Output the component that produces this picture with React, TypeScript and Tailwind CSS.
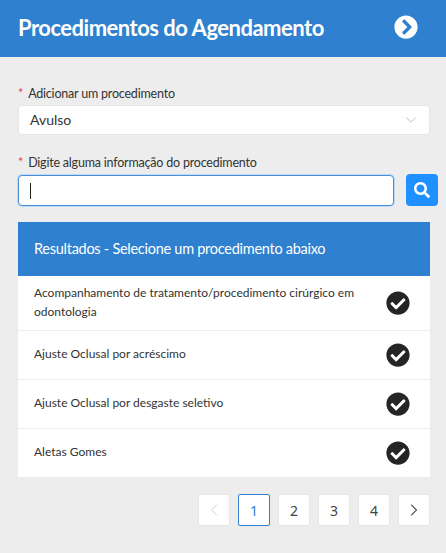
import { ChevronDown, ChevronLeft, ChevronRight } from "lucide-react";
import { FaCheckCircle, FaChevronCircleRight, FaSearch } from "react-icons/fa";

const results = [
  { name: "Acompanhamento de tratamento/procedimento cirúrgico em odontologia", row: "h-[55px]" },
  { name: "Ajuste Oclusal por acréscimo", row: "h-[49px]" },
  { name: "Ajuste Oclusal por desgaste seletivo", row: "h-[49px]" },
  { name: "Aletas Gomes", row: "h-[48px]" },
];

const pages = ["1", "2", "3", "4"];

export default function App() {
  return (
    <div className="w-[446px] h-[553px] overflow-hidden bg-[#ededed] font-['Lato',sans-serif]">
      {/* Header */}
      <div className="h-[57px] bg-[#2f80ce] pl-[18px] pr-[28px] pb-[3px] flex items-center justify-between">
        <h1 className="text-[22px] font-bold tracking-[-0.5px] text-white">Procedimentos do Agendamento</h1>
        <FaChevronCircleRight size={24} className="text-white" />
      </div>

      <div className="pl-[18px] pr-[8px] pt-[28px]">
        {/* Select */}
        <label className="block text-[12.5px] leading-[17px] tracking-[-0.2px] text-[#333]">
          <span className="text-[#e0434b] mr-[5px]">*</span>Adicionar um procedimento
        </label>
        <div className="mt-[3px] w-[412px] h-[30px] bg-white rounded-[4px] border border-[#e6e6e6] pl-[11px] pr-[9px] pb-[1px] flex items-center justify-between">
          <span className="text-[14px] text-[#333]">Avulso</span>
          <ChevronDown size={18} strokeWidth={1} className="text-[#a8a8a8]" />
        </div>

        {/* Search */}
        <label className="block mt-[19px] text-[12.5px] leading-[17px] tracking-[-0.2px] text-[#333]">
          <span className="text-[#e0434b] mr-[5px]">*</span>Digite alguma informação do procedimento
        </label>
        <div className="mt-[3px] flex gap-[12px]">
          <div className="w-[376px] shrink-0 h-[31px] self-end bg-white rounded-[4px] border border-[#4a90d9] shadow-[0_0_0_1px_#bcd9f5] pl-[11px] flex items-center">
            <div className="w-px h-[16px] bg-[#222]" />
          </div>
          <button className="w-[32px] h-[32px] shrink-0 rounded-[4px] bg-[#1e90ff] flex items-center justify-center">
            <FaSearch size={16} className="text-white" />
          </button>
        </div>

        {/* Results */}
        <div className="mt-[16px] w-[412px]">
          <div className="h-[54px] bg-[#2f80ce] pl-[16px] flex items-center text-[14.5px] tracking-[-0.27px] text-white">
            Resultados - Selecione um procedimento abaixo
          </div>
          <div className="bg-white">
            {results.map((r, i) => (
              <div
                key={r.name}
                className={`${r.row} pl-[16px] pr-[20px] flex items-center justify-between ${i < results.length - 1 ? "border-b border-[#eeeeee]" : ""}`}
              >
                <span className="w-[336px] pb-[3px] text-[12px] leading-[19px] text-[#333]">{r.name}</span>
                <FaCheckCircle size={24} className="text-[#252525]" />
              </div>
            ))}
          </div>
        </div>

        {/* Pagination */}
        <div className="mt-[17px] flex justify-end gap-[8px] w-[412px] font-['Noto_Sans',sans-serif] text-[14px] text-[#444]">
          <div className="w-[32px] h-[32px] bg-white rounded-[2px] border border-[#e6e6e6] flex items-center justify-center">
            <ChevronLeft size={20} strokeWidth={1} className="text-[#c4c4c4]" />
          </div>
          {pages.map((p) => (
            <div
              key={p}
              className={
                p === "1"
                  ? "w-[32px] h-[32px] bg-white rounded-[2px] border border-[#2f80ce] text-[#2f80ce] flex items-center justify-center"
                  : "w-[32px] h-[32px] bg-white rounded-[2px] border border-[#e6e6e6] flex items-center justify-center"
              }
            >
              {p}
            </div>
          ))}
          <div className="w-[32px] h-[32px] bg-white rounded-[2px] border border-[#e6e6e6] flex items-center justify-center">
            <ChevronRight size={20} strokeWidth={1.25} className="text-[#222]" />
          </div>
        </div>
      </div>
    </div>
  );
}
